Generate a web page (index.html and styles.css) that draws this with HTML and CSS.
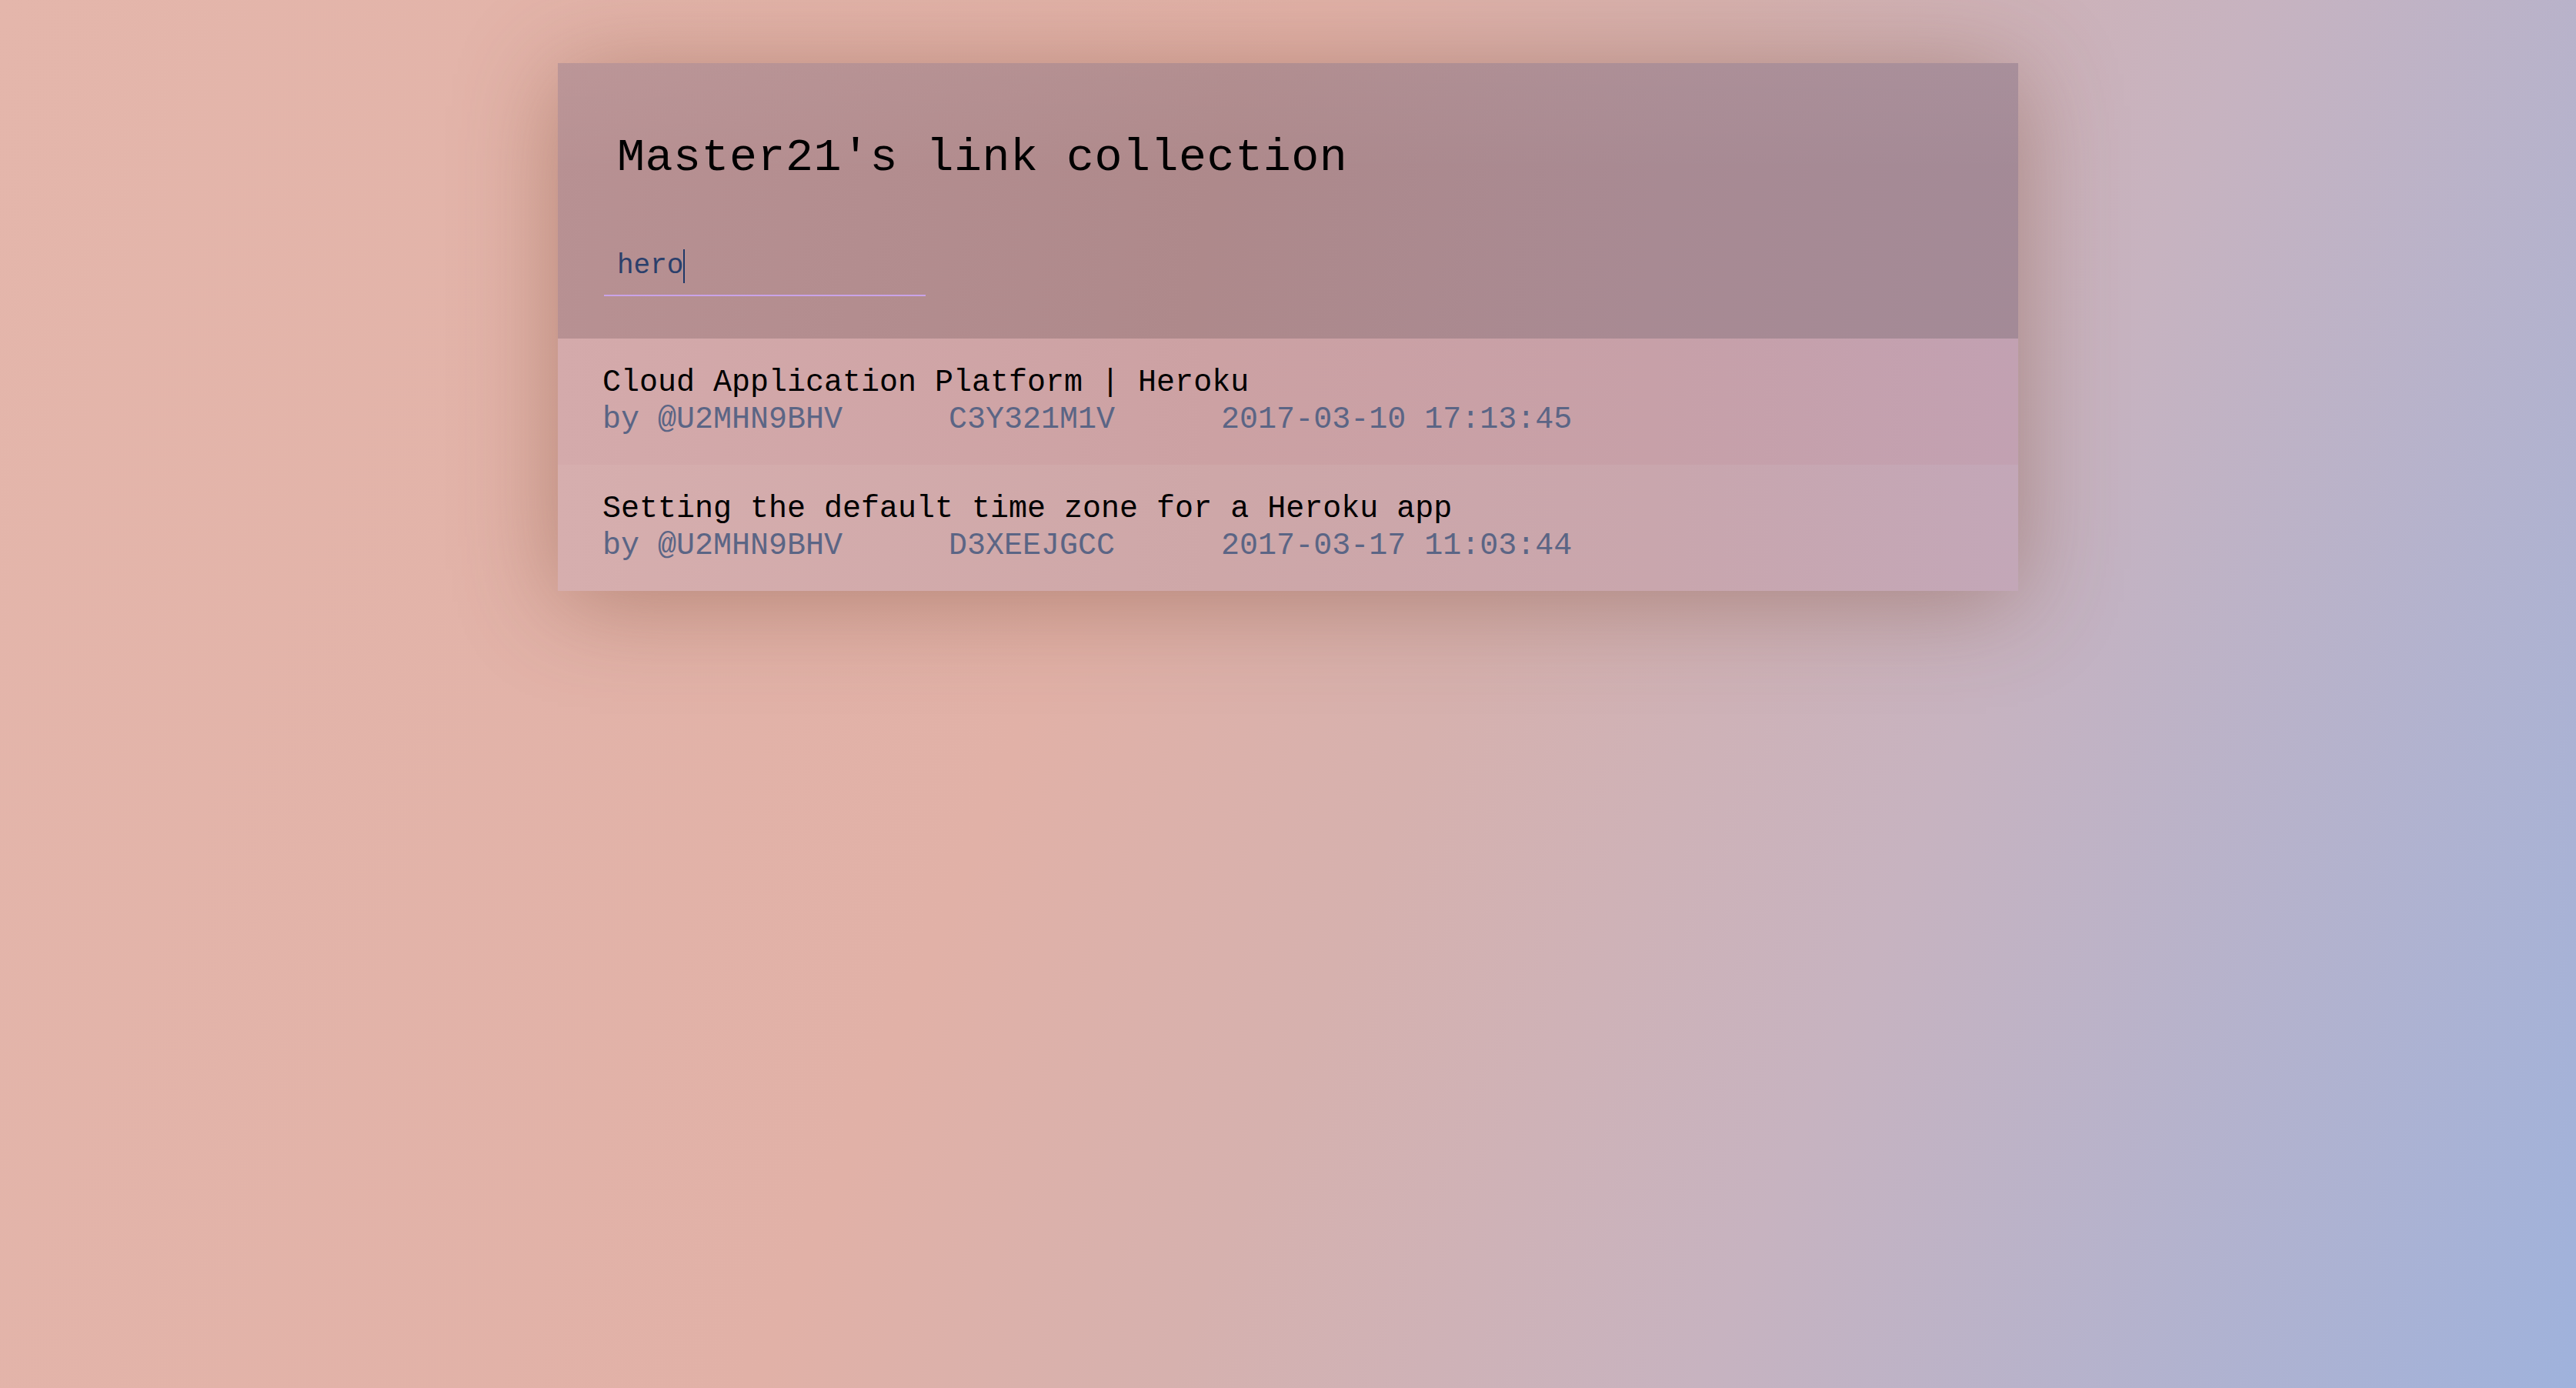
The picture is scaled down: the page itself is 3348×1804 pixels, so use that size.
FILE: index.html
```html
<!DOCTYPE html>
<html lang="en">
<head>
<meta charset="utf-8">
<title>Master21's link collection</title>
<link rel="stylesheet" href="styles.css">
</head>
<body>
<main class="card">
  <header class="card-head">
    <h1 class="title">Master21's link collection</h1>
    <div class="search"><span class="search-text">hero</span><span class="caret"></span></div>
  </header>
  <ul class="links">
    <li class="link link-a">
      <div class="link-title">Cloud Application Platform | Heroku</div>
      <div class="link-meta"><span>by @U2MHN9BHV</span><span>C3Y321M1V</span><span>2017-03-10 17:13:45</span></div>
    </li>
    <li class="link link-b">
      <div class="link-title">Setting the default time zone for a Heroku app</div>
      <div class="link-meta"><span>by @U2MHN9BHV</span><span>D3XEEJGCC</span><span>2017-03-17 11:03:44</span></div>
    </li>
  </ul>
</main>
</body>
</html>
```

FILE: styles.css
```css
html, body {
  margin: 0;
  padding: 0;
  height: 100%;
}

body {
  min-height: 1804px;
  background: linear-gradient(112deg, #e4b6ab 0%, #e1b1a7 42%, #d6b1ae 55%, #c7b3c0 72%, #9fb2dc 100%);
  font-family: "Courier New", Courier, "Nimbus Mono PS", "Nimbus Mono L", "FreeMono", "Liberation Mono", monospace;
  overflow: hidden;
}

.card {
  width: 1898px;
  margin: 82px auto 0;
  box-shadow: 0 14px 120px rgba(125, 75, 55, 0.45);
}

.card-head {
  padding: 87px 60px 55px;
  background:
    linear-gradient(180deg, rgba(255, 240, 240, 0.05) 0%, rgba(0, 0, 0, 0) 40%),
    linear-gradient(100deg, #b89193 0%, #ae898b 45%, #a88a93 75%, #a38a97 100%);
}

.title {
  margin: 0 0 83px;
  padding-left: 17px;
  font-size: 60px;
  line-height: 72px;
  font-weight: normal;
  letter-spacing: 0.5px;
  color: #000;
}

.search {
  width: 418px;
  box-sizing: border-box;
  padding: 0 17px 15px;
  border-bottom: 2px solid #c9a3e8;
  font-size: 36px;
  line-height: 44px;
  height: 61px;
  color: #2b3f6b;
}

.caret {
  display: inline-block;
  width: 2px;
  height: 44px;
  vertical-align: top;
  background: #1e3868;
}

.links {
  list-style: none;
  margin: 0;
  padding: 0;
}

.link {
  padding: 34px 58px;
  font-size: 40px;
  line-height: 48px;
}

.link-a {
  background: linear-gradient(90deg, #d4aaab 0%, #cca1a3 45%, #c7a0a8 75%, #c2a1b2 100%);
}

.link-b {
  background: linear-gradient(90deg, #d6aeae 0%, #cea7a8 45%, #c9a6ad 75%, #c3a7b8 100%);
}

.link-title {
  color: #000;
  white-space: nowrap;
}

.link-meta {
  display: flex;
  gap: 138px;
  color: #5b6585;
  white-space: nowrap;
}
```
